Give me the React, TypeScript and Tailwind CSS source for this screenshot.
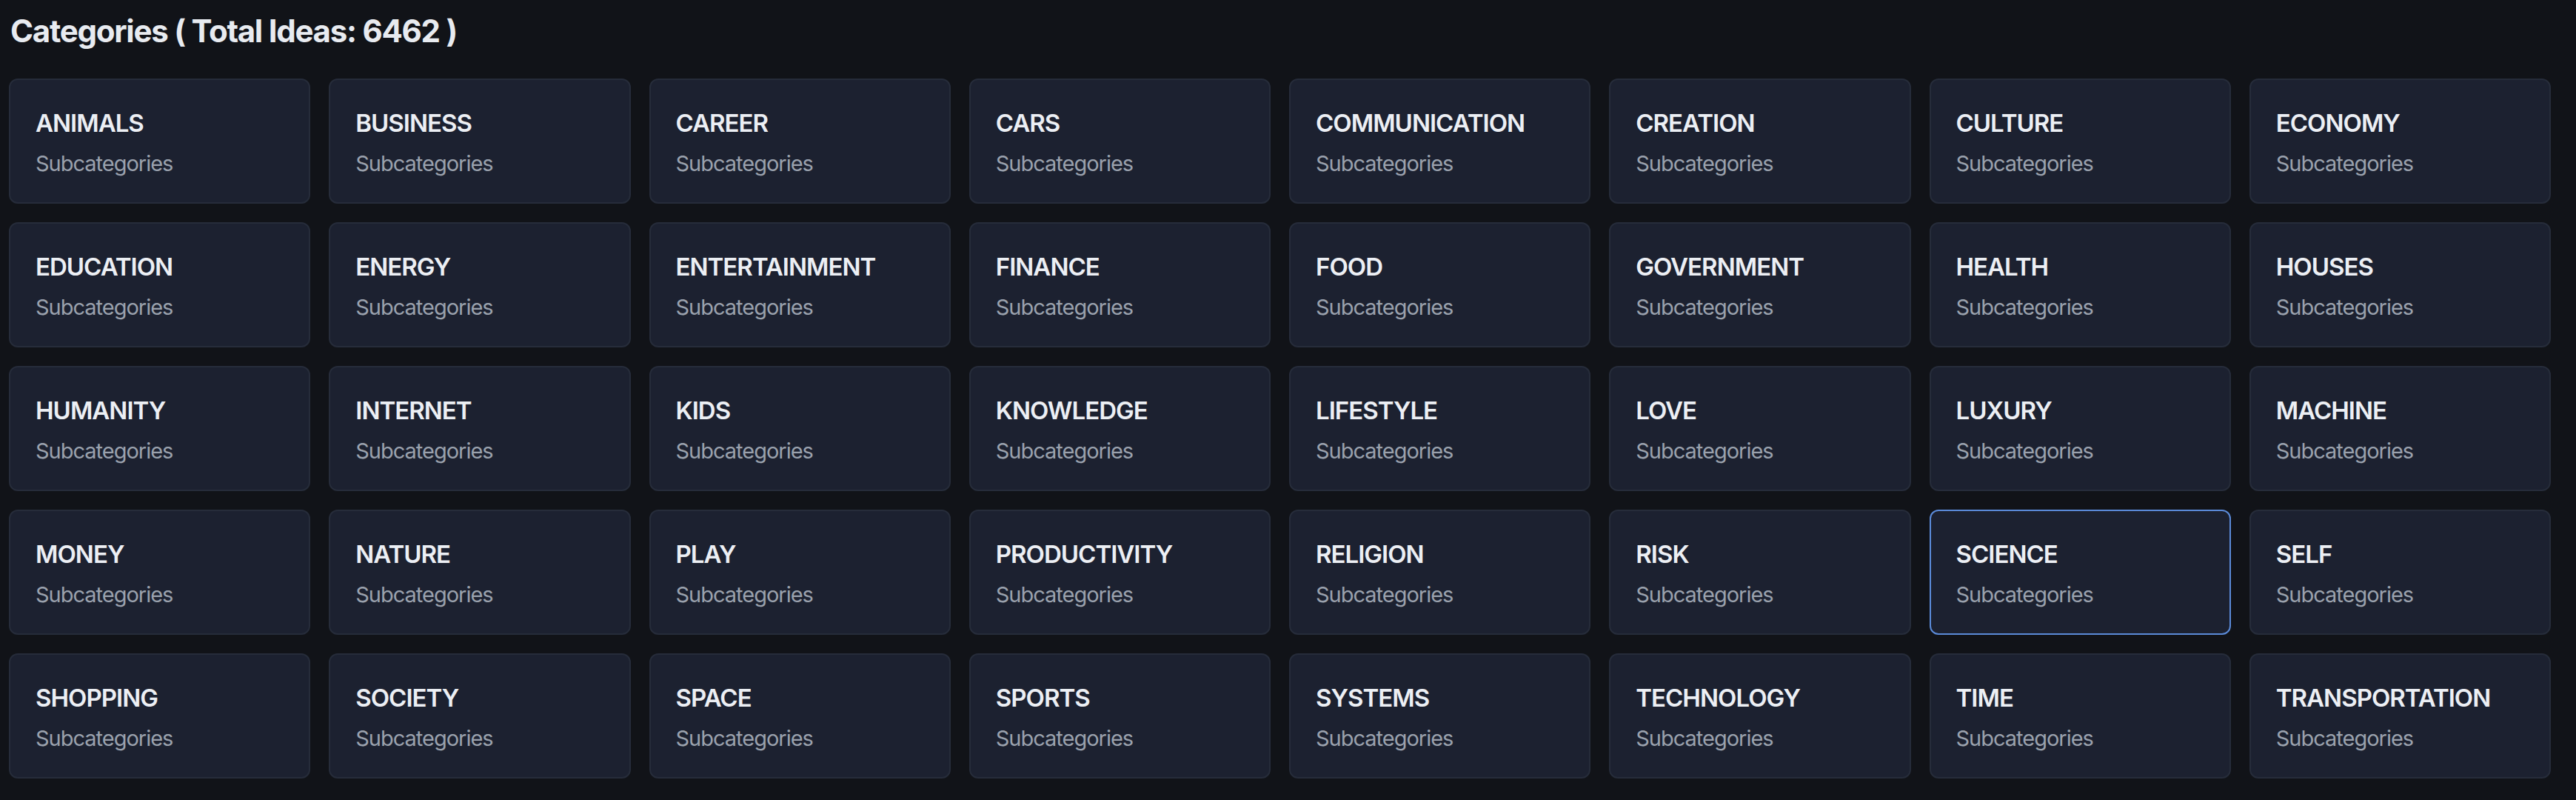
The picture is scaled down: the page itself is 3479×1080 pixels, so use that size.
import React from "react";

const CATEGORIES = [
  "ANIMALS", "BUSINESS", "CAREER", "CARS", "COMMUNICATION", "CREATION", "CULTURE", "ECONOMY",
  "EDUCATION", "ENERGY", "ENTERTAINMENT", "FINANCE", "FOOD", "GOVERNMENT", "HEALTH", "HOUSES",
  "HUMANITY", "INTERNET", "KIDS", "KNOWLEDGE", "LIFESTYLE", "LOVE", "LUXURY", "MACHINE",
  "MONEY", "NATURE", "PLAY", "PRODUCTIVITY", "RELIGION", "RISK", "SCIENCE", "SELF",
  "SHOPPING", "SOCIETY", "SPACE", "SPORTS", "SYSTEMS", "TECHNOLOGY", "TIME", "TRANSPORTATION",
];

export default function App() {
  return (
    <div
      className="h-[1080px] w-full overflow-hidden bg-[#111318] pl-[12px] pr-[34px]"
      style={{ fontFamily: "Inter, 'Noto Sans', 'Liberation Sans', sans-serif" }}
    >
      <h1 className="pl-[2px] pt-[17px] text-[42px] font-bold leading-[50px] tracking-[-0.03em] text-[#e8ebf0]">
        Categories ( Total Ideas: 6462 )
      </h1>
      <div className="mt-[39px] grid grid-cols-8 gap-[25px]">
        {CATEGORIES.map((c) => {
          const selected = c === "SCIENCE";
          return (
            <div
              key={c}
              className={
                selected
                  ? "flex h-[169px] flex-col rounded-[12px] border-2 border-[#5b8bd9] bg-[#1c2130] pl-[34px] pt-[38px]"
                  : "flex h-[169px] flex-col rounded-[12px] border-2 border-[#262c3a] bg-[#1c2130] pl-[34px] pt-[38px]"
              }
            >
              <div className="text-[33px] font-semibold leading-[40px] tracking-[-0.03em] text-[#eceff4]">{c}</div>
              <div className="mt-[17px] text-[29px] leading-[36px] tracking-[-0.035em] text-[#9aa1ad]">Subcategories</div>
            </div>
          );
        })}
      </div>
    </div>
  );
}
